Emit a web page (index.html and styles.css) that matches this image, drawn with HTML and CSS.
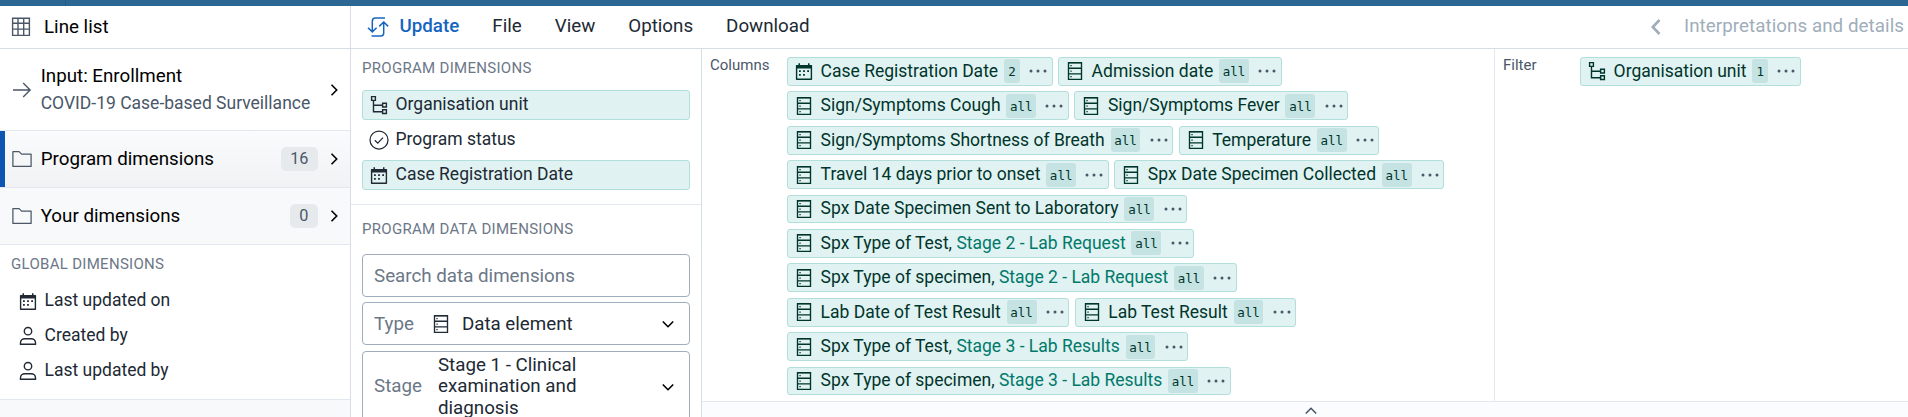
FILE: index.html
```
<!DOCTYPE html>
<html lang="en">
<head>
<meta charset="utf-8">
<title>Line list</title>
<link rel="stylesheet" href="styles.css">
</head>
<body>
<svg class="sprite" aria-hidden="true">
  <symbol id="data" viewBox="0 0 20 20"><path d="M3.5 1.6h13v16.8h-13zM3.5 7.2h13M3.5 12.8h13" fill="none" stroke="currentColor" stroke-width="1.35"/><path d="M3 1.2h14v1.3H3z" fill="currentColor"/><path d="M5.4 3.9h1.3v1.3H5.4zM5.4 9.4h1.3v1.3H5.4zM5.4 15h1.3v1.3H5.4z" fill="currentColor"/></symbol>
  <symbol id="calendar" viewBox="0 0 20 20"><path d="M2.6 4.6h14.8v13.6H2.6z" fill="none" stroke="currentColor" stroke-width="1.4" stroke-linejoin="round"/><path d="M2.5 4h15v3.4h-15zM4.5 2.2h1.5v3H4.5zM14 2.2h1.5v3H14zM5 9.2h1.8v1.8H5zM9.1 9.2h1.8v1.8H9.1zM13.2 9.2H15v1.8h-1.8zM5 13h1.8v1.8H5zM9.1 13h1.8v1.8H9.1z" fill="currentColor"/></symbol>
  <symbol id="tree" viewBox="0 0 20 20"><path d="M2.6 1.6h3.8v3.8H2.6zM13.6 8.2h3.8v3.8h-3.8zM13.6 14.7h3.8v3.8h-3.8zM4.5 5.4v11.3h9M4.5 10.2h9" fill="none" stroke="currentColor" stroke-width="1.4"/></symbol>
  <symbol id="check" viewBox="0 0 20 20"><circle cx="10" cy="10" r="9" fill="none" stroke="currentColor" stroke-width="1.25"/><path d="M5.8 10.2l3 2.9 5.2-5.5" fill="none" stroke="currentColor" stroke-width="1.25"/></symbol>
  <symbol id="user" viewBox="0 0 20 20"><circle cx="10" cy="5.2" r="3.7" fill="none" stroke="currentColor" stroke-width="1.4"/><path d="M2.5 18.3v-1.5c0-2.4 2-4.1 4.3-4.1h6.4c2.3 0 4.3 1.7 4.3 4.1v1.5z" fill="none" stroke="currentColor" stroke-width="1.4"/></symbol>
  <symbol id="folder" viewBox="0 0 20 20"><path d="M.9 2.6h6.2l2.5 2.5h9.5v12.3H.9z" fill="none" stroke="currentColor" stroke-width="1.25" stroke-linejoin="round"/></symbol>
  <symbol id="grid" viewBox="0 0 20 20"><path d="M1.6 1.2h16.8v17.2H1.6zM1.6 6.2h16.8M1.6 12.1h16.8M7 1.6v16.8M12.7 1.6v16.8" fill="none" stroke="currentColor" stroke-width="1.4"/></symbol>
  <symbol id="arrow" viewBox="0 0 20 20"><path d="M1 10h17M11.2 3l6.9 7-6.9 7" fill="none" stroke="currentColor" stroke-width="1.4"/></symbol>
  <symbol id="chevron" viewBox="0 0 20 20"><path d="M7.5 4.8l5.2 5.2-5.2 5.2" fill="none" stroke="currentColor" stroke-width="1.6"/></symbol>
  <symbol id="update" viewBox="0 0 22 22"><path d="M18 2H8.500Q5.300 2 5.300 5.200V16M1 11.700l4.300 4.200 4.300-4.200M4.500 20h9.300q2.900 0 2.900-3V6M12.200 10.400l4.500-4.400 4.500 4.400" fill="none" stroke="currentColor" stroke-width="1.5"/></symbol>
  <symbol id="dots" viewBox="0 0 20 20"><g fill="currentColor"><circle cx="3" cy="10" r="1.5"/><circle cx="10" cy="10" r="1.5"/><circle cx="17" cy="10" r="1.5"/></g></symbol>
</svg>

<div class="app">
  <div class="topbar"></div>
  <div class="toolbar">
    <div class="type"><svg class="icon"><use href="#grid"/></svg>Line list</div>
    <nav class="menu">
      <span class="update"><svg class="icon-lg"><use href="#update"/></svg>Update</span>
      <span>File</span><span>View</span><span>Options</span><span>Download</span>
    </nav>
    <div class="details"><svg class="back" viewBox="0 0 12 18"><path d="M9.5 2L2.8 9l6.7 7" fill="none" stroke="currentColor" stroke-width="2.6"/></svg>Interpretations and details</div>
  </div>
  <div class="main">
    <aside class="sidebar">
      <div class="nav-item input"><svg class="icon"><use href="#arrow"/></svg><div class="label">Input: Enrollment<small>COVID-19 Case-based Surveillance</small></div><svg class="icon chev"><use href="#chevron"/></svg></div>
      <div class="nav-item selected"><svg class="icon"><use href="#folder"/></svg><div class="label">Program dimensions</div><span class="count">16</span><svg class="icon chev"><use href="#chevron"/></svg></div>
      <div class="nav-item yours"><svg class="icon"><use href="#folder"/></svg><div class="label">Your dimensions</div><span class="count">0</span><svg class="icon chev"><use href="#chevron"/></svg></div>
      <section class="global">
        <h3>GLOBAL DIMENSIONS</h3>
        <div class="dim"><svg class="icon"><use href="#calendar"/></svg><span>Last updated on</span></div>
        <div class="dim"><svg class="icon"><use href="#user"/></svg><span>Created by</span></div>
        <div class="dim"><svg class="icon"><use href="#user"/></svg><span>Last updated by</span></div>
      </section>
    </aside>
    <div class="panel">
      <section class="program">
        <h3>PROGRAM DIMENSIONS</h3>
        <div class="dim on"><svg class="icon"><use href="#tree"/></svg><span>Organisation unit</span></div>
        <div class="dim"><svg class="icon"><use href="#check"/></svg><span>Program status</span></div>
        <div class="dim on"><svg class="icon"><use href="#calendar"/></svg><span>Case Registration Date</span></div>
      </section>
      <section class="data">
        <h3>PROGRAM DATA DIMENSIONS</h3>
        <div class="field placeholder">Search data dimensions</div>
        <div class="field"><span class="prefix">Type</span><svg class="icon type-icon"><use href="#data"/></svg><span class="value">Data element</span><svg class="icon down"><use href="#chevron"/></svg></div>
        <div class="field stage"><span class="prefix">Stage</span><span class="value">Stage 1 - Clinical examination and diagnosis</span><svg class="icon down"><use href="#chevron"/></svg></div>
      </section>
    </div>
    <div class="content">
      <div class="axes">
        <div class="axis columns">
          <div class="axis-label">Columns</div>
          <div class="chips">
            <div class="chip"><svg class="icon"><use href="#calendar"/></svg><span>Case Registration Date</span><b>2</b><svg class="icon more"><use href="#dots"/></svg></div>
            <div class="chip"><svg class="icon"><use href="#data"/></svg><span>Admission date</span><b>all</b><svg class="icon more"><use href="#dots"/></svg></div>
            <div class="chip"><svg class="icon"><use href="#data"/></svg><span>Sign/Symptoms Cough</span><b>all</b><svg class="icon more"><use href="#dots"/></svg></div>
            <div class="chip"><svg class="icon"><use href="#data"/></svg><span>Sign/Symptoms Fever</span><b>all</b><svg class="icon more"><use href="#dots"/></svg></div>
            <div class="chip"><svg class="icon"><use href="#data"/></svg><span>Sign/Symptoms Shortness of Breath</span><b>all</b><svg class="icon more"><use href="#dots"/></svg></div>
            <div class="chip"><svg class="icon"><use href="#data"/></svg><span>Temperature</span><b>all</b><svg class="icon more"><use href="#dots"/></svg></div>
            <div class="chip"><svg class="icon"><use href="#data"/></svg><span>Travel 14 days prior to onset</span><b>all</b><svg class="icon more"><use href="#dots"/></svg></div>
            <div class="chip"><svg class="icon"><use href="#data"/></svg><span>Spx Date Specimen Collected</span><b>all</b><svg class="icon more"><use href="#dots"/></svg></div>
            <div class="chip"><svg class="icon"><use href="#data"/></svg><span>Spx Date Specimen Sent to Laboratory</span><b>all</b><svg class="icon more"><use href="#dots"/></svg></div>
            <div class="chip"><svg class="icon"><use href="#data"/></svg><span>Spx Type of Test, <i>Stage 2 - Lab Request</i></span><b>all</b><svg class="icon more"><use href="#dots"/></svg></div>
            <div class="chip"><svg class="icon"><use href="#data"/></svg><span>Spx Type of specimen, <i>Stage 2 - Lab Request</i></span><b>all</b><svg class="icon more"><use href="#dots"/></svg></div>
            <div class="chip"><svg class="icon"><use href="#data"/></svg><span>Lab Date of Test Result</span><b>all</b><svg class="icon more"><use href="#dots"/></svg></div>
            <div class="chip"><svg class="icon"><use href="#data"/></svg><span>Lab Test Result</span><b>all</b><svg class="icon more"><use href="#dots"/></svg></div>
            <div class="chip"><svg class="icon"><use href="#data"/></svg><span>Spx Type of Test, <i>Stage 3 - Lab Results</i></span><b>all</b><svg class="icon more"><use href="#dots"/></svg></div>
            <div class="chip"><svg class="icon"><use href="#data"/></svg><span>Spx Type of specimen, <i>Stage 3 - Lab Results</i></span><b>all</b><svg class="icon more"><use href="#dots"/></svg></div>
          </div>
        </div>
        <div class="axis filter">
          <div class="axis-label">Filter</div>
          <div class="chips">
            <div class="chip"><svg class="icon"><use href="#tree"/></svg><span>Organisation unit</span><b>1</b><svg class="icon more"><use href="#dots"/></svg></div>
          </div>
        </div>
      </div>
      <div class="collapse"><svg class="icon up"><use href="#chevron"/></svg></div>
    </div>
  </div>
</div>
</body>
</html>
```
FILE: styles.css
```
* { box-sizing: border-box; }
body { margin: 0; background: #fff; font-family: Roboto, "Liberation Sans", sans-serif; font-size: 17.5px; color: #212934; overflow: hidden; }
.sprite { position: absolute; width: 0; height: 0; }
.icon { width: 20px; height: 20px; flex: none; display: block; }
.app { height: 417px; display: flex; flex-direction: column; overflow: hidden; }
.topbar { height: 6px; flex: none; background: linear-gradient(90deg, #2c6693 65px, #255a84 65px, #255a84 66px, #2c6693 66px); }

.toolbar { height: 43px; flex: none; display: flex; border-bottom: 1px solid #d5dde5; }
.type { width: 351px; border-right: 1px solid #d5dde5; display: flex; align-items: center; gap: 13px; padding-left: 11px; font-size: 18.75px; color: #000; }
.type .icon { color: #4a5768; }
.menu { display: flex; align-items: center; gap: 33px; padding: 0 0 3px 15.5px; font-size: 18.75px; }
.update { display: flex; align-items: center; gap: 11px; color: #1565c0; font-weight: 500; }
.icon-lg { width: 22px; height: 22px; margin-top: 3px; }
.details { margin-left: auto; display: flex; align-items: center; gap: 22px; padding: 0 4px 3px 0; font-size: 18.75px; letter-spacing: .06px; color: #a0adba; }
.back { width: 12px; height: 18px; margin-top: 3px; }

.main { flex: 1; min-height: 0; display: flex; }
.sidebar { width: 351px; flex: none; border-right: 1px solid #d5dde5; background: #f8f9fb; }
.nav-item { display: flex; align-items: center; border-bottom: 1px solid #e3e8ee; padding: 0 6px 0 12px; color: #000; font-size: 18.75px; }
.nav-item > .icon:first-child { color: #4a5768; margin-right: 8.7px; }
.label { flex: 1; }
.label small { display: block; font-size: 17.5px; line-height: 24px; color: #4a5768; margin: 2px 0 1px; }
.input { height: 82px; background: #fff; line-height: 25px; }
.selected { height: 57px; background: linear-gradient(90deg, #0d55b0 5px, transparent 5px), linear-gradient(#fafbfc, #f1f2f4); }
.yours { height: 57px; }
.count { font-size: 16.25px; line-height: 24px; padding: 0 9.5px; background: #e7eaed; color: #4a5768; border-radius: 5px; margin-right: 6px; }
.chev { color: #000; }

h3 { margin: 0; font-size: 15px; font-weight: 400; letter-spacing: .3px; line-height: 18px; color: #6c7787; }
.global { height: 155px; background: #fff; border-bottom: 1px solid #e3e8ee; padding: 10px 11px; }
.global .dim { padding-left: 6px; }
.global h3 { margin-bottom: 13px; }
.dim { height: 30px; margin-bottom: 5px; display: flex; align-items: center; gap: 6.5px; padding: 0 6px; border: 1px solid transparent; border-radius: 3px; line-height: 24px; }
.global .dim .icon { margin-top: -1px; }
.dim span { margin-top: -2px; }
.dim.on { background: #e0f2f1; border-color: #b2dfdb; }

.panel { width: 351px; flex: none; border-right: 1px solid #d5dde5; overflow: hidden; }
.program { height: 156px; padding: 10px 11px; border-bottom: 1px solid #e3e8ee; }
.program h3 { margin-bottom: 13px; }
.data { padding: 15px 11px; }
.data h3 { margin-bottom: 16px; }
.field { height: 43px; border: 1px solid #a0adba; border-radius: 4px; display: flex; align-items: center; padding: 0 11px; margin-bottom: 5px; font-size: 18.75px; }
.placeholder, .prefix { color: #6c7787; }
.field .type-icon { margin: 0 11px 0 17px; }
.field .value { flex: 1; }
.field .down { transform: rotate(90deg); color: #000; }
.stage { height: 72px; line-height: 21.5px; margin-top: 6px; }
.stage .value { margin: 0 80px 0 16px; }

.content { flex: 1; min-width: 0; display: flex; flex-direction: column; }
.axes { height: 353px; flex: none; display: flex; border-bottom: 1px solid #e3e8ee; }
.axis { display: flex; padding: 8px 0 0 8px; }
.columns { width: 793px; border-right: 1px solid #e3e8ee; }
.axis-label { width: 77px; flex: none; font-size: 15px; line-height: 16px; color: #4a5768; }
.chips { flex: 1; display: flex; flex-wrap: wrap; align-content: flex-start; gap: 5.6px 5.5px; padding-right: 40px; }
.chip { height: 28.8px; display: flex; align-items: center; border: 1px solid #b2dfdb; border-radius: 3px; background: #e0f2f1; color: #00352c; padding: 0 3.4px 0 6px; white-space: nowrap; }
.chip > span { margin: -1px 0 0 6.6px; }
.chip i { font-style: normal; color: #00796b; }
.chip b { font: 400 12.5px/23px "DejaVu Sans Mono", monospace; padding: 1px 3.7px 0; background: #c5e3e2; border-radius: 3px; min-width: 16px; text-align: center; margin-left: 5.8px; }
.chip .more { margin-left: 8.2px; color: #4a5768; }
.collapse { flex: 1; background: #fbfcfd; display: flex; justify-content: center; padding-left: 11px; }
.up { transform: rotate(-90deg); margin-top: -1px; color: #4a5768; }
```
